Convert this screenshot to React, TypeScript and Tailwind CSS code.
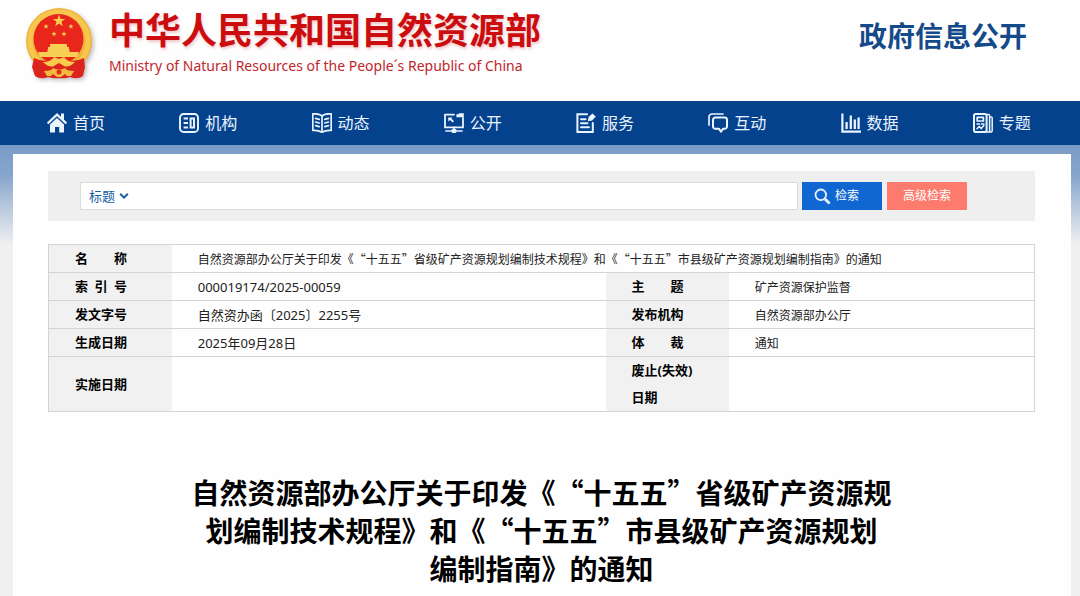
import type { ReactNode } from 'react';

const wrap = 'ml-[13px] mr-[9px]';

function Icon({ children }: { children: ReactNode }) {
  return (
    <svg
      viewBox="0 0 20 20"
      className="h-5 w-5 shrink-0"
      fill="none"
      stroke="#eaf4ff"
      strokeWidth="1.6"
      strokeLinejoin="round"
      strokeLinecap="round"
      aria-hidden="true"
    >
      {children}
    </svg>
  );
}

const navItems: { label: string; icon: ReactNode }[] = [
  {
    label: '首页',
    icon: (
      <>
        <path d="M.6 10.4 10 1.6l9.4 8.8" strokeWidth="2.2" strokeLinecap="butt" strokeLinejoin="miter" />
        <path d="M14 .4h3v7l-3-2.8z" fill="#eaf4ff" stroke="none" />
        <path d="M10 5 17 11.4V19.6H12.2V14H8v5.6H3V11.4z" fill="#eaf4ff" stroke="none" />
      </>
    ),
  },
  {
    label: '机构',
    icon: (
      <>
        <rect x="1" y="1" width="18" height="18" rx="3.6" strokeWidth="1.9" />
        <path d="M4.6 5.6H9M4.6 10H9M4.6 14.4H9" strokeWidth="2" strokeLinecap="butt" />
        <path d="M11.6 5.6H15v8.8h-3.4z" strokeWidth="2" strokeLinejoin="miter" />
      </>
    ),
  },
  {
    label: '动态',
    icon: (
      <>
        <path d="M10 2.8C7.6.8 4 .6.8.9v16.6c3-.2 6.5.2 9.2 1.8 2.7-1.6 6.2-2 9.2-1.8V.9C16 .6 12.4.8 10 2.8zM10 3v16" strokeWidth="1.7" />
        <path d="m3.6 5.4 3.6 1M3.6 9l3.6 1M3.6 12.6l3.6 1M16.4 5.4l-3.6 1M16.4 9l-3.6 1M16.4 12.6l-3.6 1" strokeWidth="1.7" />
      </>
    ),
  },
  {
    label: '公开',
    icon: (
      <>
        <path d="M10 1.6H1v12.8h18V5" strokeWidth="1.8" />
        <path d="M12.4 1.2h2l.8-.9h4.6v4h-7.4z" fill="#eaf4ff" stroke="none" />
        <path d="M4.2 4.4h4.2L7.4 5.6 10 8.2 8.6 9.6 6 7 4.2 8.6z" fill="#eaf4ff" stroke="none" />
        <path d="M10 14.4V18M2 18h16" strokeWidth="1.7" />
        <rect x="7.6" y="16" width="4.8" height="3.9" rx="1" fill="#eaf4ff" stroke="none" />
      </>
    ),
  },
  {
    label: '服务',
    icon: (
      <>
        <path d="M11 1.2H1.4V19h15.4v-9" strokeWidth="2" strokeLinejoin="miter" />
        <path d="M5 6.2h4.6M5 10.2h6.5M5 14.2h8" strokeWidth="1.9" />
        <path d="m11.8 8.2.8-4.2L16.4.4l3.4 3.2-3.6 3.8z" fill="#eaf4ff" stroke="none" />
      </>
    ),
  },
  {
    label: '互动',
    icon: (
      <>
        <path d="M1 12V4a3 3 0 0 1 3-3h11" strokeWidth="1.7" />
        <path d="M7.4 4.6h9.2A2.4 2.4 0 0 1 19 7v6.4a2.4 2.4 0 0 1-2.4 2.4H15l-2 2.8-2-2.8H7.4A2.4 2.4 0 0 1 5 13.4V7a2.4 2.4 0 0 1 2.4-2.4z" strokeWidth="2" />
      </>
    ),
  },
  {
    label: '数据',
    icon: (
      <>
        <path d="M1.4.4v18.2H20" strokeWidth="2.2" strokeLinecap="butt" strokeLinejoin="miter" />
        <path d="M5.6 9v7M9.8 2.5V16M13.8 6.5V16M17.6 4.5V16" strokeWidth="2.3" strokeLinecap="butt" />
      </>
    ),
  },
  {
    label: '专题',
    icon: (
      <>
        <rect x="1" y="1" width="12.6" height="18" rx="1.8" strokeWidth="2" />
        <rect x="4.2" y="4.4" width="6.2" height="3.6" strokeWidth="1.7" />
        <path d="M4 11h2.5M8.5 11H11M4 15.8l2.2-2.4 2 2.2 2.6-3" strokeWidth="1.5" />
        <path d="M14 1.4h1.6a1 1 0 0 1 1 1V19H13M17 4h1.2a1 1 0 0 1 1 1v12.5a1.5 1.5 0 0 1-1.6 1.5" strokeWidth="1.5" />
      </>
    ),
  },
];

const STAR = 'M0-1 .235-.324.951-.309.38.124.588.809 0 .4-.588.809-.38.124-.951-.309-.235-.324z';

function Emblem() {
  return (
    <svg viewBox="0 0 68 72" className="h-[72px] w-[68px] shrink-0 drop-shadow-[2px_2px_2px_rgba(0,0,0,0.25)]" role="img" aria-label="国徽">
      <circle cx="34" cy="34" r="33" fill="#efb53a" />
      <circle cx="34" cy="34" r="29" fill="none" stroke="#f6c64e" strokeWidth="5" />
      <circle cx="33.5" cy="32" r="25" fill="#e8261c" />
      <g fill="#f7cf52">
        <path d={STAR} transform="translate(34 14) scale(6.4)" />
        <path d={STAR} transform="translate(21 19.5) scale(2.8)" />
        <path d={STAR} transform="translate(46 19.5) scale(2.8)" />
        <path d={STAR} transform="translate(29 27) scale(2.8)" />
        <path d={STAR} transform="translate(39 27) scale(2.8)" />
        <path d="M25 37h17v3h2v3.5H23V40h2z" />
        <path d="M13 45h9.500v-2.500h22V45H54l-2 5H15z" />
      </g>
      <path d="M9 51q8 4 17 2l8-2 8 2q9 2 17-2l1 9-2 9q-6 4-13 1-6 2-11 1-5 1-11-1-7 3-13-1l-3-9z" fill="#dc231d" />
      <path d="M18 55q8 0 11-5l5 2 5-2q3 5 11 5-6 6-11 4l-5-3-5 3q-5 2-11-4z" fill="#f8cb4c" />
      <path d="M19 64q8 0 9-3 6 3 12 0 1 3 9 3l-3 5h-4l-2-2-4 3h-4l-4-3-2 2h-4z" fill="#f3ba3e" />
      <circle cx="34" cy="65" r="2.5" fill="#e8261c" />
    </svg>
  );
}

type Row = [string, string, string, string];
const rows: Row[] = [
  ['索\u2002引\u2002号', '000019174/2025-00059', '主\u2003\u2003题', '矿产资源保护监督'],
  ['发文字号', '自然资办函〔2025〕2255号', '发布机构', '自然资源部办公厅'],
  ['生成日期', '2025年09月28日', '体\u2003\u2003裁', '通知'],
  ['实施日期', '', '废止(失效)日期', ''],
];

const th = "h-7 bg-[#f1f1f1] pl-[26px] pr-6 text-left text-[13px] leading-[27px] font-bold text-black";
const tdText = "pl-[26px] text-xs leading-5 font-['Noto_Sans_CJK_SC',sans-serif]";
const tdNumber = "pl-[26px] text-[13px] leading-5";

export default function App() {
  return (
    <div
      lang="zh-CN"
      className="min-h-screen bg-[#f0f0f0] font-['Noto_Sans','Noto_Sans_CJK_SC',sans-serif] text-[#222] [text-spacing-trim:space-all]"
    >
      <header className="flex h-[101px] items-start justify-between bg-[#fefefe] pr-[53px] pl-[25px]">
        <div className="flex items-start gap-4 pt-[7px]">
          <Emblem />
          <div>
            <h1 className="text-4xl leading-[48px] font-bold whitespace-nowrap text-[#cb0d10] [text-shadow:1px_2px_3px_rgba(200,30,30,0.25)]">
              中华人民共和国自然资源部
            </h1>
            <p className="text-sm leading-[22px] whitespace-nowrap text-[#c0262b]">
              Ministry of Natural Resources of the People´s Republic of China
            </p>
          </div>
        </div>
        <h2 className="pt-4 text-[28px] leading-10 font-bold whitespace-nowrap text-[#154a8a]">政府信息公开</h2>
      </header>

      <nav className="bg-[#05428e]" aria-label="主导航">
        <ul className={`${wrap} flex h-11`}>
          {navItems.map((item) => (
            <li key={item.label} className="flex-1">
              <a href="#" className="flex h-full items-center gap-[6px] pl-[34px] text-base text-[#eaf4ff]">
                <Icon>{item.icon}</Icon>
                {item.label}
              </a>
            </li>
          ))}
        </ul>
      </nav>

      <div className="bg-[linear-gradient(#7a9cc6_0px,#86a5cc_30px,#c3d1e2_70px,#f0f0f0_100px)] pt-[9px]">
        <main className={`${wrap} min-h-[442px] bg-[#fefefe] pt-[17px] pr-9 pl-[35px]`}>
          <form className="flex h-[50px] items-center gap-1 bg-[#efefef] pr-[68px] pl-8" onSubmit={(e) => e.preventDefault()}>
            <div className="flex h-7 flex-1 items-center border border-[#dcdcdc] bg-white">
              <div className="relative flex items-center">
                <select
                  aria-label="检索范围"
                  className="w-12 appearance-none bg-transparent pl-2 text-[13px] leading-5 text-[#17609f] outline-none"
                >
                  <option>标题</option>
                </select>
                <svg viewBox="0 0 10 8" className="pointer-events-none absolute right-0 h-2 w-[10px]" fill="none" stroke="#17609f" strokeWidth="2" aria-hidden="true">
                  <path d="m1.2 1.8 3.8 3.8 3.8-3.8" />
                </svg>
              </div>
              <input type="text" aria-label="检索词" className="h-full min-w-0 flex-1 bg-transparent px-2 text-[13px] outline-none" />
            </div>
            <button type="submit" className="flex h-7 w-20 items-center gap-1 bg-[#1167d2] pl-3 text-xs text-white">
              <svg viewBox="0 0 17 17" className="h-[17px] w-[17px]" fill="none" stroke="#e8f3ff" aria-hidden="true">
                <circle cx="6.8" cy="6.8" r="5.3" strokeWidth="1.8" />
                <path d="m11 11 4.6 4.6" strokeWidth="2.8" />
              </svg>
              检索
            </button>
            <button type="button" className="ml-px h-7 w-20 bg-[#fd7b6c] text-xs text-white">
              高级检索
            </button>
          </form>

          <table className="mt-[23px] w-full table-fixed border-collapse border border-[#d4d4d4]">
            <colgroup>
              <col className="w-[12.5%]" />
              <col className="w-[44%]" />
              <col className="w-[12.5%]" />
              <col className="w-[31%]" />
            </colgroup>
            <tbody>
              <tr className="border-b border-[#d4d4d4]">
                <th scope="row" className={th}>{'名\u2003\u2003称'}</th>
                <td colSpan={3} className={tdText}>
                  自然资源部办公厅关于印发《“十五五”省级矿产资源规划编制技术规程》和《“十五五”市县级矿产资源规划编制指南》的通知
                </td>
              </tr>
              {rows.map(([labelA, valueA, labelB, valueB]) => (
                <tr key={labelA} className="border-b border-[#d4d4d4]">
                  <th scope="row" className={th}>{labelA}</th>
                  <td className={tdNumber}>{valueA}</td>
                  <th scope="row" className={th}>{labelB}</th>
                  <td className={tdText}>{valueB}</td>
                </tr>
              ))}
            </tbody>
          </table>

          <h2 className="mt-[61px] text-center font-['Noto_Sans_CJK_SC',sans-serif] text-[28px] leading-[38px] font-bold text-black">
            自然资源部办公厅关于印发《“十五五”省级矿产资源规
            <br />
            划编制技术规程》和《“十五五”市县级矿产资源规划
            <br />
            编制指南》的通知
          </h2>
        </main>
      </div>
    </div>
  );
}
